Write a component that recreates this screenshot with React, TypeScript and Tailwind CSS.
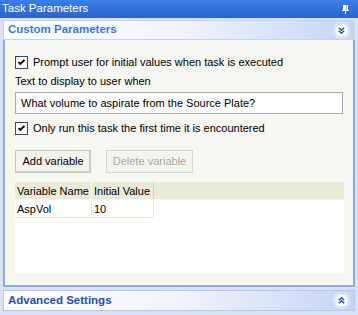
export default function App() {
  return (
    <div className="w-[358px] h-[315px] flex flex-col bg-[#d8e1f6] font-['Liberation_Sans',sans-serif] text-[11px] text-black overflow-hidden">
      {/* Title bar */}
      <div className="h-[18px] flex items-center justify-between pl-[2px] pr-[8px] bg-gradient-to-b from-[#3b7ee6] to-[#2a64cf] text-white text-[11.5px]">
        <span>Task Parameters</span>
        <svg width="9" height="10" viewBox="0 0 9 10">
          <path d="M2 1h5v5H2z M1 6h7v1H1z M4 7h1v3H4z" fill="#fff" />
          <path d="M5 1h1v5H5z" fill="#9bb8ee" />
        </svg>
      </div>

      <div className="flex-1 flex flex-col px-[3px] pt-[2px]">
        {/* Custom Parameters header */}
        <div className="h-[20px] flex items-center justify-between pl-[4px] pr-[5px] rounded-t-[3px] bg-gradient-to-r from-white via-[#f1f4fd] to-[#c7d4f7] border border-[#c6d3f5]">
          <span className="font-bold text-[11.5px] text-[#3a78ea]">Custom Parameters</span>
          <Chevron down />
        </div>

        {/* Content */}
        <div className="h-[247px] flex flex-col bg-[#f7f7f1] border-x-[2px] border-b-[2px] border-[#8ea9e6] px-[10px] pt-[15px]">
          <label className="flex items-center gap-[5px] h-[15px]">
            <Check />
            <span>Prompt user for initial values when task is executed</span>
          </label>
          <div className="mt-[4px] h-[15px] leading-[15px]">Text to display to user when</div>
          <div className="mt-[3px] h-[22px] w-[328px] bg-white border border-[#a5acb5] flex items-center pl-[5px]">
            What volume to aspirate from the Source Plate?
          </div>
          <label className="mt-[7px] flex items-center gap-[5px] h-[15px]">
            <Check />
            <span>Only run this task the first time it is encountered</span>
          </label>
          <div className="mt-[14px] flex gap-[15px]">
            <button className="h-[23px] w-[76px] border border-[#c9c7ba] bg-[#f4f3ee] shadow-[inset_-1px_-1px_0_#d6d2c2]">
              Add variable
            </button>
            <button className="h-[23px] w-[87px] border border-[#d9d7cd] bg-[#f4f3ee] text-[#acaa99]">
              Delete variable
            </button>
          </div>
          <div className="mt-[9px] w-[329px] h-[91px] bg-white flex flex-col whitespace-nowrap">
            <div className="h-[18px] flex bg-[#ebe9d8] border-b border-[#f7f6f0]">
              <div className="w-[77px] shrink-0 pl-[2px] leading-[18px] border-r border-[#fbfaf6]">Variable Name</div>
              <div className="w-[62px] shrink-0 pl-[2px] leading-[18px] border-r border-[#d6d2c0]">Initial Value</div>
            </div>
            <div className="h-[18px] flex">
              <div className="w-[77px] shrink-0 pl-[2px] leading-[18px] border-r border-b border-[#ece9d8]">AspVol</div>
              <div className="w-[62px] shrink-0 pl-[2px] leading-[18px] border-r border-b border-[#ece9d8]">10</div>
            </div>
          </div>
        </div>

        {/* Advanced Settings header */}
        <div className="mt-[3px] h-[21px] flex items-center justify-between pl-[4px] pr-[5px] bg-gradient-to-r from-white via-[#f1f4fd] to-[#c7d4f7] border border-[#b6c6f0]">
          <span className="font-bold text-[11.5px] text-[#2150c0]">Advanced Settings</span>
          <Chevron />
        </div>
      </div>
    </div>
  )
}

function Check() {
  return (
    <span className="w-[13px] h-[13px] shrink-0 border border-[#1c5180] bg-white flex items-center justify-center">
      <svg width="9" height="9" viewBox="0 0 9 9">
        <path d="M1.5 4.2 L3.3 6 L7.5 1.8" stroke="#000" strokeWidth="1.8" fill="none" />
      </svg>
    </span>
  )
}

function Chevron({ down }: { down?: boolean }) {
  return (
    <span className="w-[15px] h-[15px] rounded-full bg-white border border-[#c5cfe8] shadow-[0_0_0_1px_#e9eefb] flex items-center justify-center">
      <svg width="7" height="7" viewBox="0 0 7 7" className={down ? '' : 'rotate-180'}>
        <path d="M0.8 0.8 L3.5 3.3 L6.2 0.8 M0.8 3.7 L3.5 6.2 L6.2 3.7" stroke="#2150c0" strokeWidth="1.4" fill="none" />
      </svg>
    </span>
  )
}
